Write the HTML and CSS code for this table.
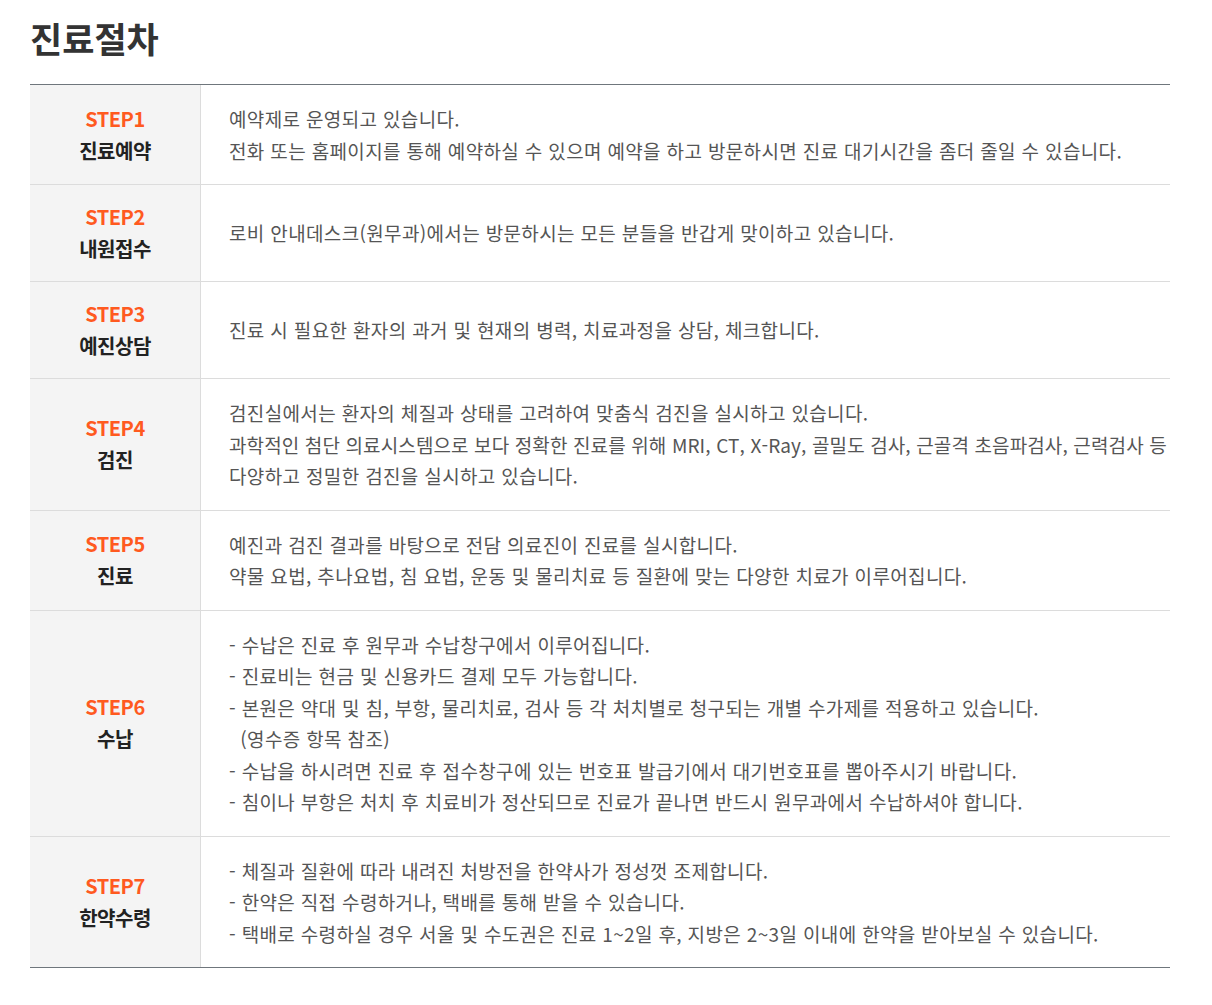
FILE: index.html
```html
<!DOCTYPE html>
<html lang="ko">
<head>
<meta charset="utf-8">
<title>진료절차</title>
<link rel="stylesheet" href="styles.css">
</head>
<body>
<div class="page">
  <h1 class="title">진료절차</h1>
  <div class="steps">
    <div class="row">
      <div class="head"><span class="num">STEP1</span><span class="name">진료예약</span></div>
      <div class="desc"><p class="text">예약제로 운영되고 있습니다.<br>전화 또는 홈페이지를 통해 예약하실 수 있으며 예약을 하고 방문하시면 진료 대기시간을 좀더 줄일 수 있습니다.</p></div>
    </div>
    <div class="row">
      <div class="head"><span class="num">STEP2</span><span class="name">내원접수</span></div>
      <div class="desc"><p class="text">로비 안내데스크(원무과)에서는 방문하시는 모든 분들을 반갑게 맞이하고 있습니다.</p></div>
    </div>
    <div class="row">
      <div class="head"><span class="num">STEP3</span><span class="name">예진상담</span></div>
      <div class="desc"><p class="text">진료 시 필요한 환자의 과거 및 현재의 병력, 치료과정을 상담, 체크합니다.</p></div>
    </div>
    <div class="row">
      <div class="head"><span class="num">STEP4</span><span class="name">검진</span></div>
      <div class="desc"><p class="text">검진실에서는 환자의 체질과 상태를 고려하여 맞춤식 검진을 실시하고 있습니다.<br><span class="tight">과학적인 첨단 의료시스템으로 보다 정확한 진료를 위해 MRI, CT, X-Ray, 골밀도 검사, 근골격 초음파검사, 근력검사 등</span><br>다양하고 정밀한 검진을 실시하고 있습니다.</p></div>
    </div>
    <div class="row">
      <div class="head"><span class="num">STEP5</span><span class="name">진료</span></div>
      <div class="desc"><p class="text">예진과 검진 결과를 바탕으로 전담 의료진이 진료를 실시합니다.<br>약물 요법, 추나요법, 침 요법, 운동 및 물리치료 등 질환에 맞는 다양한 치료가 이루어집니다.</p></div>
    </div>
    <div class="row">
      <div class="head"><span class="num">STEP6</span><span class="name">수납</span></div>
      <div class="desc"><p class="text">- 수납은 진료 후 원무과 수납창구에서 이루어집니다.<br>- 진료비는 현금 및 신용카드 결제 모두 가능합니다.<br>- 본원은 약대 및 침, 부항, 물리치료, 검사 등 각 처치별로 청구되는 개별 수가제를 적용하고 있습니다.<br>&nbsp;&nbsp;(영수증 항목 참조)<br>- 수납을 하시려면 진료 후 접수창구에 있는 번호표 발급기에서 대기번호표를 뽑아주시기 바랍니다.<br>- 침이나 부항은 처치 후 치료비가 정산되므로 진료가 끝나면 반드시 원무과에서 수납하셔야 합니다.</p></div>
    </div>
    <div class="row">
      <div class="head"><span class="num">STEP7</span><span class="name">한약수령</span></div>
      <div class="desc"><p class="text">- 체질과 질환에 따라 내려진 처방전을 한약사가 정성껏 조제합니다.<br>- 한약은 직접 수령하거나, 택배를 통해 받을 수 있습니다.<br>- 택배로 수령하실 경우 서울 및 수도권은 진료 1~2일 후, 지방은 2~3일 이내에 한약을 받아보실 수 있습니다.</p></div>
    </div>
  </div>
</div>
</body>
</html>
```

FILE: styles.css
```css
html, body {
  margin: 0;
  padding: 0;
  background: #fff;
}
body {
  font-family: "Noto Sans CJK KR", "Noto Sans", sans-serif;
  color: #555;
}
.page {
  padding: 14px 42px 0 30px;
}
.title {
  margin: 0 0 22px;
  font-size: 35px;
  line-height: 48px;
  font-weight: 700;
  color: #333;
}
.steps {
  border-top: 1px solid #6f767c;
  border-bottom: 1px solid #6f767c;
}
.row {
  display: flex;
  border-bottom: 1px solid #dcdcdc;
}
.row:last-child {
  border-bottom: none;
}
.head {
  flex: 0 0 170px;
  background: #f4f4f4;
  border-right: 1px solid #dcdcdc;
  display: flex;
  flex-direction: column;
  justify-content: center;
  align-items: center;
  padding: 16px 0;
  font-weight: 700;
  font-size: 20px;
  line-height: 32px;
}
.num {
  color: #ff5a1f;
  letter-spacing: -0.5px;
}
.name {
  color: #222;
  letter-spacing: -0.5px;
}
.desc {
  flex: 1;
  padding: 18px 0 18px 28px;
  display: flex;
  align-items: center;
  min-width: 0;
}
.text {
  margin: 0;
  font-size: 19px;
  line-height: 31.5px;
  color: #555;
  letter-spacing: 0.35px;
  white-space: nowrap;
}
.tight {
  letter-spacing: 0.12px;
}
```
